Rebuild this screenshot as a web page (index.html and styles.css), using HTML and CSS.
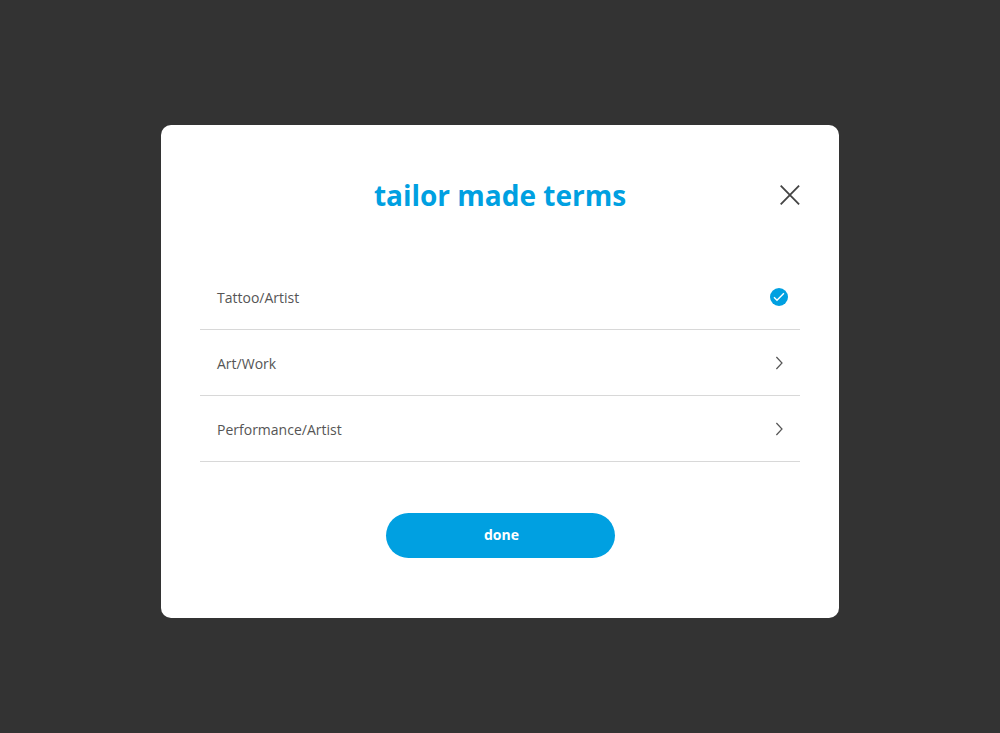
FILE: index.html
```html
<!DOCTYPE html>
<html lang="en">
<head>
<meta charset="utf-8">
<title>tailor made terms</title>
<link rel="stylesheet" href="styles.css">
</head>
<body>
<main class="modal">
  <header class="header">
    <h1 class="title">tailor made terms</h1>
    <button class="close" aria-label="Close"><svg width="20" height="20" viewBox="0 0 20 20"><path d="M.7.7l18.4 18.6M19.1.7L.7 19.3" fill="none" stroke="#444" stroke-width="1.8"/></svg></button>
  </header>
  <ul class="list">
    <li class="row"><span>Tattoo/Artist</span><svg class="icon check" width="18" height="18" viewBox="0 0 18 18"><circle cx="9" cy="9" r="9" fill="#00a0e1"/><path d="M4 9.3l3 3 6.9-7" fill="none" stroke="#fff" stroke-width="1.4"/></svg></li>
    <li class="row"><span>Art/Work</span><svg class="icon" width="8" height="14" viewBox="0 0 8 14"><path d="M1.4 1l5.6 6-5.6 6" fill="none" stroke="#555" stroke-width="1.2"/></svg></li>
    <li class="row"><span>Performance/Artist</span><svg class="icon" width="8" height="14" viewBox="0 0 8 14"><path d="M1.4 1l5.6 6-5.6 6" fill="none" stroke="#555" stroke-width="1.2"/></svg></li>
  </ul>
  <button class="done">done</button>
</main>
</body>
</html>
```
FILE: styles.css
```css
* { box-sizing: border-box; }
body {
  margin: 0;
  height: 733px;
  padding-top: 125px;
  background: #333;
  font-family: "Open Sans", sans-serif;
}
.modal {
  width: 678px;
  height: 493px;
  margin: 0 auto;
  padding: 50px 39px 0;
  border-radius: 10px;
  background: #fff;
}
.header {
  display: grid;
  grid-template-columns: 20px 1fr 20px;
  align-items: center;
  height: 40px;
}
.title {
  grid-column: 2;
  margin: 0;
  color: #00a0e1;
  font-size: 28px;
  line-height: 40px;
  font-weight: 700;
  text-align: center;
}
.close {
  width: 20px;
  height: 20px;
  padding: 0;
  border: 0;
  background: none;
}
.close svg { display: block; }
.list {
  margin: 49px 0 0;
  padding: 0;
  list-style: none;
}
.row {
  display: flex;
  align-items: center;
  justify-content: space-between;
  height: 66px;
  padding: 2px 17px 0;
  border-bottom: 1px solid #d8d8d8;
  color: #555;
  font-size: 14px;
}
.icon { margin-bottom: 2px; }
.check { margin-right: -5px; }
.done {
  display: block;
  width: 229px;
  height: 45px;
  margin: 51px auto 0;
  padding: 0 0 2px 3px;
  border: 0;
  border-radius: 23px;
  background: #00a0e1;
  color: #fff;
  font: 700 14px "Open Sans", sans-serif;
}
```
